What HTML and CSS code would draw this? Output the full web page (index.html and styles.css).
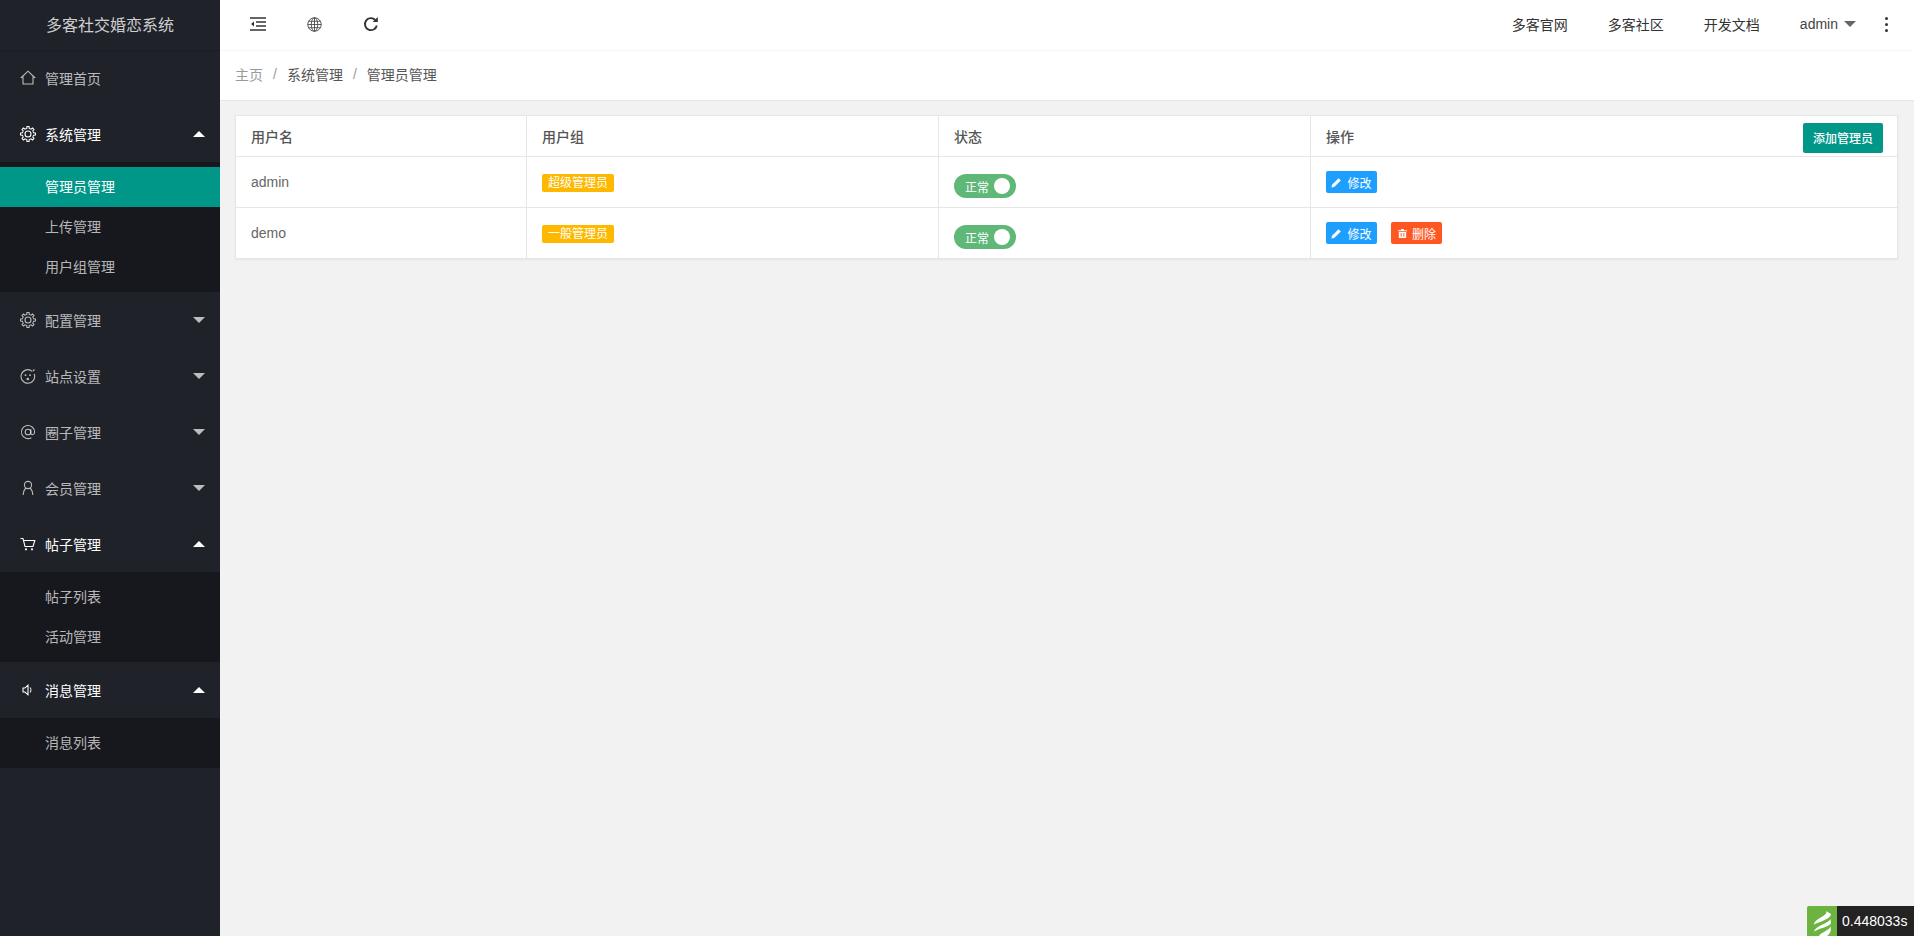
FILE: index.html
```html
<!DOCTYPE html>
<html lang="zh-CN">
<head>
<meta charset="utf-8">
<title>管理员管理</title>
<link rel="stylesheet" href="styles.css">
</head>
<body>
<svg class="defs" aria-hidden="true">
  <defs>
    <path id="tooth" d="M5.820 2.730 6.770 2.440 6.960 .570H9.040L9.230 2.440 10.180 2.730"/>
    <g id="gear">
      <use href="#tooth"/>
      <use href="#tooth" transform="rotate(45 8 8)"/>
      <use href="#tooth" transform="rotate(90 8 8)"/>
      <use href="#tooth" transform="rotate(135 8 8)"/>
      <use href="#tooth" transform="rotate(180 8 8)"/>
      <use href="#tooth" transform="rotate(225 8 8)"/>
      <use href="#tooth" transform="rotate(270 8 8)"/>
      <use href="#tooth" transform="rotate(315 8 8)"/>
      <circle cx="8" cy="8" r="3"/>
    </g>
    <path id="pencil" d="M.5 11.500l.6-3L8.300 1.300l2.400 2.400-7.200 7.200z"/>
  </defs>
</svg>
<div class="app">
  <aside class="side">
    <div class="logo">多客社交婚恋系统</div>
    <nav>
      <a class="item"><svg class="ic" viewBox="0 0 16 16"><path d="M.8 8 8 1.200 15.200 8M3 6.600V14h10V6.600"/></svg>管理首页</a>
      <a class="item open"><svg class="ic" viewBox="0 0 16 16"><use href="#gear"/></svg>系统管理<i class="up"></i></a>
      <div class="sub">
        <a class="active">管理员管理</a>
        <a>上传管理</a>
        <a>用户组管理</a>
      </div>
      <a class="item"><svg class="ic" viewBox="0 0 16 16"><use href="#gear"/></svg>配置管理<i class="down"></i></a>
      <a class="item"><svg class="ic" viewBox="0 0 16 16"><path d="M12.300 3.300A6.800 6.800 0 1 0 14.200 6"/><circle cx="5.500" cy="7.200" r=".9" class="fill"/><circle cx="10" cy="7.200" r=".9" class="fill"/><circle cx="7.800" cy="11" r="1.300" class="fill"/><path d="M13 3l1.500-1.500"/></svg>站点设置<i class="down"></i></a>
      <a class="item"><svg class="ic" viewBox="0 0 16 16"><circle cx="8" cy="8" r="2.800"/><path d="M10.800 5.300V9.200c0 2.200 3.800 2.200 3.800-1.200A6.600 6.600 0 1 0 11.400 13.700"/></svg>圈子管理<i class="down"></i></a>
      <a class="item"><svg class="ic" viewBox="0 0 16 16"><circle cx="8" cy="5" r="3.600"/><path d="M6 8.300C4 9.500 3.400 12 3.200 15M10 8.300c2 1.200 2.600 3.700 2.800 6.700"/></svg>会员管理<i class="down"></i></a>
      <a class="item open"><svg class="ic" viewBox="0 0 16 16"><path d="M.5 2.500h2.500l2 8h8l1.800-6H3.800"/><circle cx="6" cy="13.300" r="1.100" class="fill"/><circle cx="12" cy="13.300" r="1.100" class="fill"/></svg>帖子管理<i class="up"></i></a>
      <div class="sub">
        <a>帖子列表</a>
        <a>活动管理</a>
      </div>
      <a class="item open"><svg class="ic" viewBox="0 0 16 16"><path d="M3 6h2l3-2.800v9.600L5 10H3zM10 5.500c1.200 1.300 1.200 3.700 0 5"/></svg>消息管理<i class="up"></i></a>
      <div class="sub">
        <a>消息列表</a>
      </div>
    </nav>
  </aside>
  <main class="main">
    <header class="top">
      <div class="tools">
        <svg class="tool" viewBox="0 0 16 14"><path d="M0 1h16M6 5h10M6 9h10M0 13h16"/><path d="M4 4.500 1 7l3 2.500z" class="fill"/></svg>
        <svg class="tool globe" viewBox="0 0 14 14"><circle cx="7" cy="7" r="6.300"/><ellipse cx="7" cy="7" rx="3" ry="6.300"/><path d="M7 .7v12.600M.7 7h12.600M1.500 4h11M1.500 10h11"/></svg>
        <svg class="tool reload" viewBox="0 0 16 16"><path d="M13.800 9.500A6 6 0 1 1 12.300 4"/><path d="M14.800 .9v5.200H9.600z" class="fill"/></svg>
      </div>
      <div class="links">
        <a>多客官网</a>
        <a>多客社区</a>
        <a>开发文档</a>
        <a class="user">admin<i class="caret"></i></a>
        <span class="dots"><i></i><i></i><i></i></span>
      </div>
    </header>
    <div class="crumb">
      <a class="muted">主页</a><span class="sep">/</span><a>系统管理</a><span class="sep">/</span><a>管理员管理</a>
    </div>
    <section class="content">
      <table class="grid">
        <colgroup><col class="c1"><col class="c2"><col class="c3"><col></colgroup>
        <thead>
          <tr><th>用户名</th><th>用户组</th><th>状态</th><th><div class="ophead">操作<button class="add">添加管理员</button></div></th></tr>
        </thead>
        <tbody>
          <tr>
            <td>admin</td>
            <td><span class="badge">超级管理员</span></td>
            <td><span class="switch">正常<i></i></span></td>
            <td><button class="btn edit"><svg viewBox="0 0 12 12"><use href="#pencil"/></svg>修改</button></td>
          </tr>
          <tr>
            <td>demo</td>
            <td><span class="badge">一般管理员</span></td>
            <td><span class="switch">正常<i></i></span></td>
            <td><div class="ops"><button class="btn edit"><svg viewBox="0 0 12 12"><use href="#pencil"/></svg>修改</button><button class="btn del"><svg viewBox="0 0 12 12"><path fill-rule="evenodd" d="M1 2.500h3.500V1h3v1.500H11v1H1zM2 4.300h8V11H2zM4 5.500v4h1v-4zM7 5.500v4h1v-4z"/></svg>删除</button></div></td>
          </tr>
        </tbody>
      </table>
    </section>
  </main>
</div>
<div class="trace">
  <span class="mark"><svg viewBox="0 0 30 30"><path d="M19 5C22 10 7 12 7 19c0-2 17-5 17-11M23 12c2 5-15 7-16 14 1-3 18-5 17-10M23 20c1 4-9 6-11 10h8c3-2 5-6 3-10z"/></svg></span>
  <span class="time">0.448033s</span>
</div>
</body>
</html>
```
FILE: styles.css
```css
* { box-sizing: border-box; }
html, body { margin: 0; height: 100%; }
body {
  font-family: "Liberation Sans", "Noto Sans CJK SC", sans-serif;
  font-size: 14px;
  color: #666;
  background: #f2f2f2;
  overflow: hidden;
}
i { font-style: normal; }
.defs { display: none; }
.app { display: flex; height: 936px; }

.side { width: 220px; flex: none; background: #20222a; color: rgba(255,255,255,.7); }
.logo {
  height: 50px;
  display: flex;
  align-items: center;
  justify-content: center;
  padding: 0 0 2px;
  font-size: 16px;
  color: rgba(255,255,255,.8);
  box-shadow: 0 1px 2px rgba(0,0,0,.1);
}
.item { display: flex; align-items: center; height: 56px; padding: 0 15px 1px 20px; }
.item.open { color: #fff; }
.ic {
  width: 16px;
  height: 16px;
  margin-right: 9px;
  fill: none;
  stroke: currentColor;
  stroke-width: 1.100;
}
.ic .fill { fill: currentColor; stroke: none; }
.up, .down { margin-left: auto; width: 0; height: 0; border: 6px solid transparent; }
.up { border-bottom-color: #fff; border-top-width: 0; }
.down { border-top-color: rgba(255,255,255,.7); border-bottom-width: 0; }
.sub { background: #17181e; padding: 5px 0; }
.sub a { display: flex; align-items: center; height: 40px; padding: 0 0 2px 45px; }
.sub a.active { background: #009688; color: #fff; }

.main { flex: 1; min-width: 0; display: flex; flex-direction: column; }
.top {
  height: 51px;
  flex: none;
  background: #fff;
  border-bottom: 1px solid #f6f6f6;
  display: flex;
  align-items: center;
  justify-content: space-between;
  padding: 0 26px 2px 30px;
  color: #333;
}
.tools { display: flex; align-items: center; gap: 41px; }
.tool { width: 16px; height: 14px; fill: none; stroke: #333; stroke-width: 1.500; }
.tool .fill { fill: #333; stroke: none; }
.globe { stroke-width: .8; width: 15px; height: 15px; stroke: #444; }
.reload { stroke-width: 1.900; height: 16px; }
.links { display: flex; align-items: center; gap: 40px; }
.user { display: flex; align-items: center; color: #444; }
.caret {
  margin-left: 6px;
  width: 0;
  height: 0;
  border: 6px solid transparent;
  border-top-color: #666;
  border-bottom-width: 0;
}
.dots { display: flex; flex-direction: column; gap: 3px; margin-left: -11px; width: 3px; }
.dots i { width: 3px; height: 3px; border-radius: 50%; background: #333; }

.crumb {
  height: 50px;
  flex: none;
  background: #fff;
  border-bottom: 1px solid #e6e6e6;
  display: flex;
  align-items: center;
  padding: 0 15px 4px;
  color: #555;
}
.muted { color: #999; }
.sep { margin: 0 10px; color: #999; }

.content { padding: 14px 16px 15px 15px; }
.grid {
  width: 100%;
  table-layout: fixed;
  border-collapse: collapse;
  background: #fff;
  box-shadow: 0 1px 2px rgba(0,0,0,.05);
}
.c1 { width: 291px; }
.c2 { width: 412px; }
.c3 { width: 372px; }
.grid th, .grid td {
  border: 1px solid #e6e6e6;
  padding: 0 15px;
  text-align: left;
  font-weight: normal;
  height: 51px;
}
.grid th { height: 41px; padding-bottom: 1px; color: #555; font-weight: 500; }
.ophead { display: flex; align-items: center; justify-content: space-between; }
button { font: inherit; border: 0; color: #fff; cursor: pointer; }
.add { width: 80px; height: 30px; margin: 4px -1px 0 0; padding: 0; background: #009688; border-radius: 2px; font-size: 12px; }
.badge {
  display: inline-block;
  height: 18px;
  line-height: 18px;
  margin-top: 2px;
  padding: 0 6px;
  background: #ffb800;
  color: #fff;
  font-size: 12px;
  border-radius: 2px;
  vertical-align: top;
}
.switch {
  display: flex;
  align-items: center;
  justify-content: space-between;
  width: 62px;
  height: 24px;
  margin-top: 8px;
  padding: 0 6px 0 11px;
  background: #5fb878;
  color: #fff;
  font-size: 12px;
  border-radius: 12px;
}
.switch i { width: 16px; height: 16px; border-radius: 50%; background: #fff; }
.ops { display: flex; gap: 14px; }
.btn {
  display: inline-flex;
  align-items: center;
  justify-content: center;
  width: 51px;
  height: 22px;
  padding: 0;
  font-size: 12px;
  border-radius: 2px;
  vertical-align: top;
}
.btn svg { width: 11px; height: 11px; margin-right: 4px; fill: #fff; }
.edit svg { margin-right: 5px; }
.edit { background: #1e9fff; }
.del { background: #ff5722; }

.trace { position: fixed; right: 0; bottom: 0; display: flex; height: 30px; }
.mark { width: 30px; height: 30px; background: #6db33f; overflow: hidden; border-radius: 2px 0 0 0; }
.mark svg { display: block; width: 30px; height: 30px; fill: #fff; }
.time {
  width: 77px;
  background: #232323;
  color: #fff;
  line-height: 30px;
  padding-left: 5px;
  font-size: 14px;
}
```
